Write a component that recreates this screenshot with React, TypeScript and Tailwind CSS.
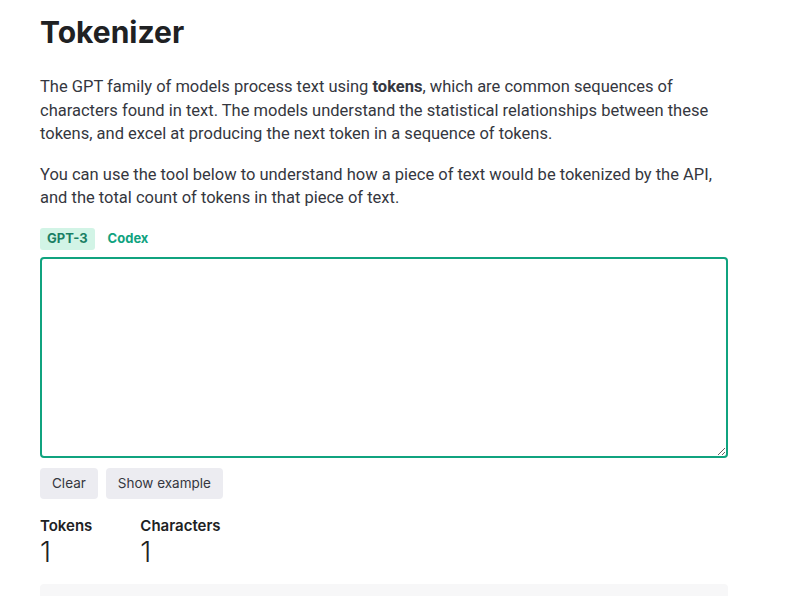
import { useState } from 'react';

const App = () => {
  const [tab, setTab] = useState<'gpt3' | 'codex'>('gpt3');
  const [text, setText] = useState('');

  return (
    <div className="min-h-screen bg-white font-['Roboto',sans-serif] text-[#353740]">
      <div className="w-[688px] ml-10 pt-[12px]">
        <h1 className="font-['Inter',sans-serif] text-[30px] leading-[40px] font-bold text-[#202123]">
          Tokenizer
        </h1>
        <p className="mt-[23px] text-[16.5px] leading-[23.5px]">
          The GPT family of models process text using <strong className="font-bold">tokens</strong>, which are
          common sequences of characters found in text. The models understand the statistical relationships
          between these tokens, and excel at producing the next token in a sequence of tokens.
        </p>
        <p className="mt-[17px] text-[16.5px] leading-[23.5px]">
          You can use the tool below to understand how a piece of text would be tokenized by the API, and the
          total count of tokens in that piece of text.
        </p>
        <div className="mt-[18px] flex gap-[6px] font-['Inter',sans-serif] text-[13px] font-bold">
          <button
            className={`h-[22px] px-[7px] rounded-[3px] ${tab === 'gpt3' ? 'bg-[#d2f4e6] text-[#1a7f64]' : 'text-[#10a37f]'}`}
            onClick={() => setTab('gpt3')}
          >
            GPT-3
          </button>
          <button
            className={`h-[22px] px-[7px] rounded-[3px] ${tab === 'codex' ? 'bg-[#d2f4e6] text-[#1a7f64]' : 'text-[#10a37f]'}`}
            onClick={() => setTab('codex')}
          >
            Codex
          </button>
        </div>
        <textarea
          className="mt-[7px] block w-full h-[201px] border-2 border-[#10a37f] rounded-[4px] p-2 outline-none text-[16px]"
          value={text}
          onChange={(e) => setText(e.target.value)}
        />
        <div className="mt-[10px] flex gap-[8px] font-['Inter',sans-serif] text-[13.5px] text-[#353740]">
          <button className="h-[31px] px-[12px] rounded-[4px] bg-[#ececf1]" onClick={() => setText('')}>
            Clear
          </button>
          <button className="h-[31px] px-[12px] rounded-[4px] bg-[#ececf1]">Show example</button>
        </div>
        <div className="mt-[16px] flex gap-[48px] font-['Inter',sans-serif]">
          <div>
            <div className="text-[15px] leading-[22px] font-semibold text-[#202123]">Tokens</div>
            <div className="text-[28px] leading-[30px] font-light text-[#202123]">1</div>
          </div>
          <div>
            <div className="text-[15px] leading-[22px] font-semibold text-[#202123]">Characters</div>
            <div className="text-[28px] leading-[30px] font-light text-[#202123]">{Math.max(text.length, 1)}</div>
          </div>
        </div>
        <div className="mt-[17px] h-[60px] rounded-[4px] bg-[#f7f7f8]" />
      </div>
    </div>
  );
};

export default App;
